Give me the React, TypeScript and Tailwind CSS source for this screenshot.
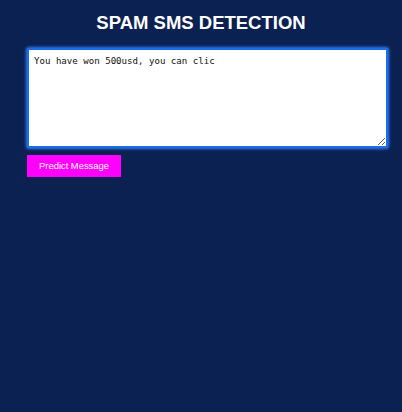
export default function App() {
  return (
    <div className="min-h-[412px] w-full bg-[#0b2152] px-[27px] pt-[12px] font-['Liberation_Sans',Arial,sans-serif]">
      <h1 className="text-center text-[18.5px] font-bold leading-[22px] text-white">SPAM SMS DETECTION</h1>

      <div className="mt-[14px]">
        <textarea
          defaultValue="You have won 500usd, you can clic"
          className="block h-[100px] w-[361px] resize-y rounded-[2px] border-2 border-[#1d6ce8] bg-white px-[5px] pt-[5px] pb-[4px] font-['DejaVu_Sans_Mono','Liberation_Mono',monospace] text-[9.1px] leading-[12px] text-[#111] shadow-[0_0_3px_1px_#2f7cf5] outline-none"
        />
      </div>

      <button className="mt-[7px] flex h-[22px] w-[94px] items-center justify-center bg-[#ff00ff] text-[9.4px] text-white">
        Predict Message
      </button>
    </div>
  );
}
